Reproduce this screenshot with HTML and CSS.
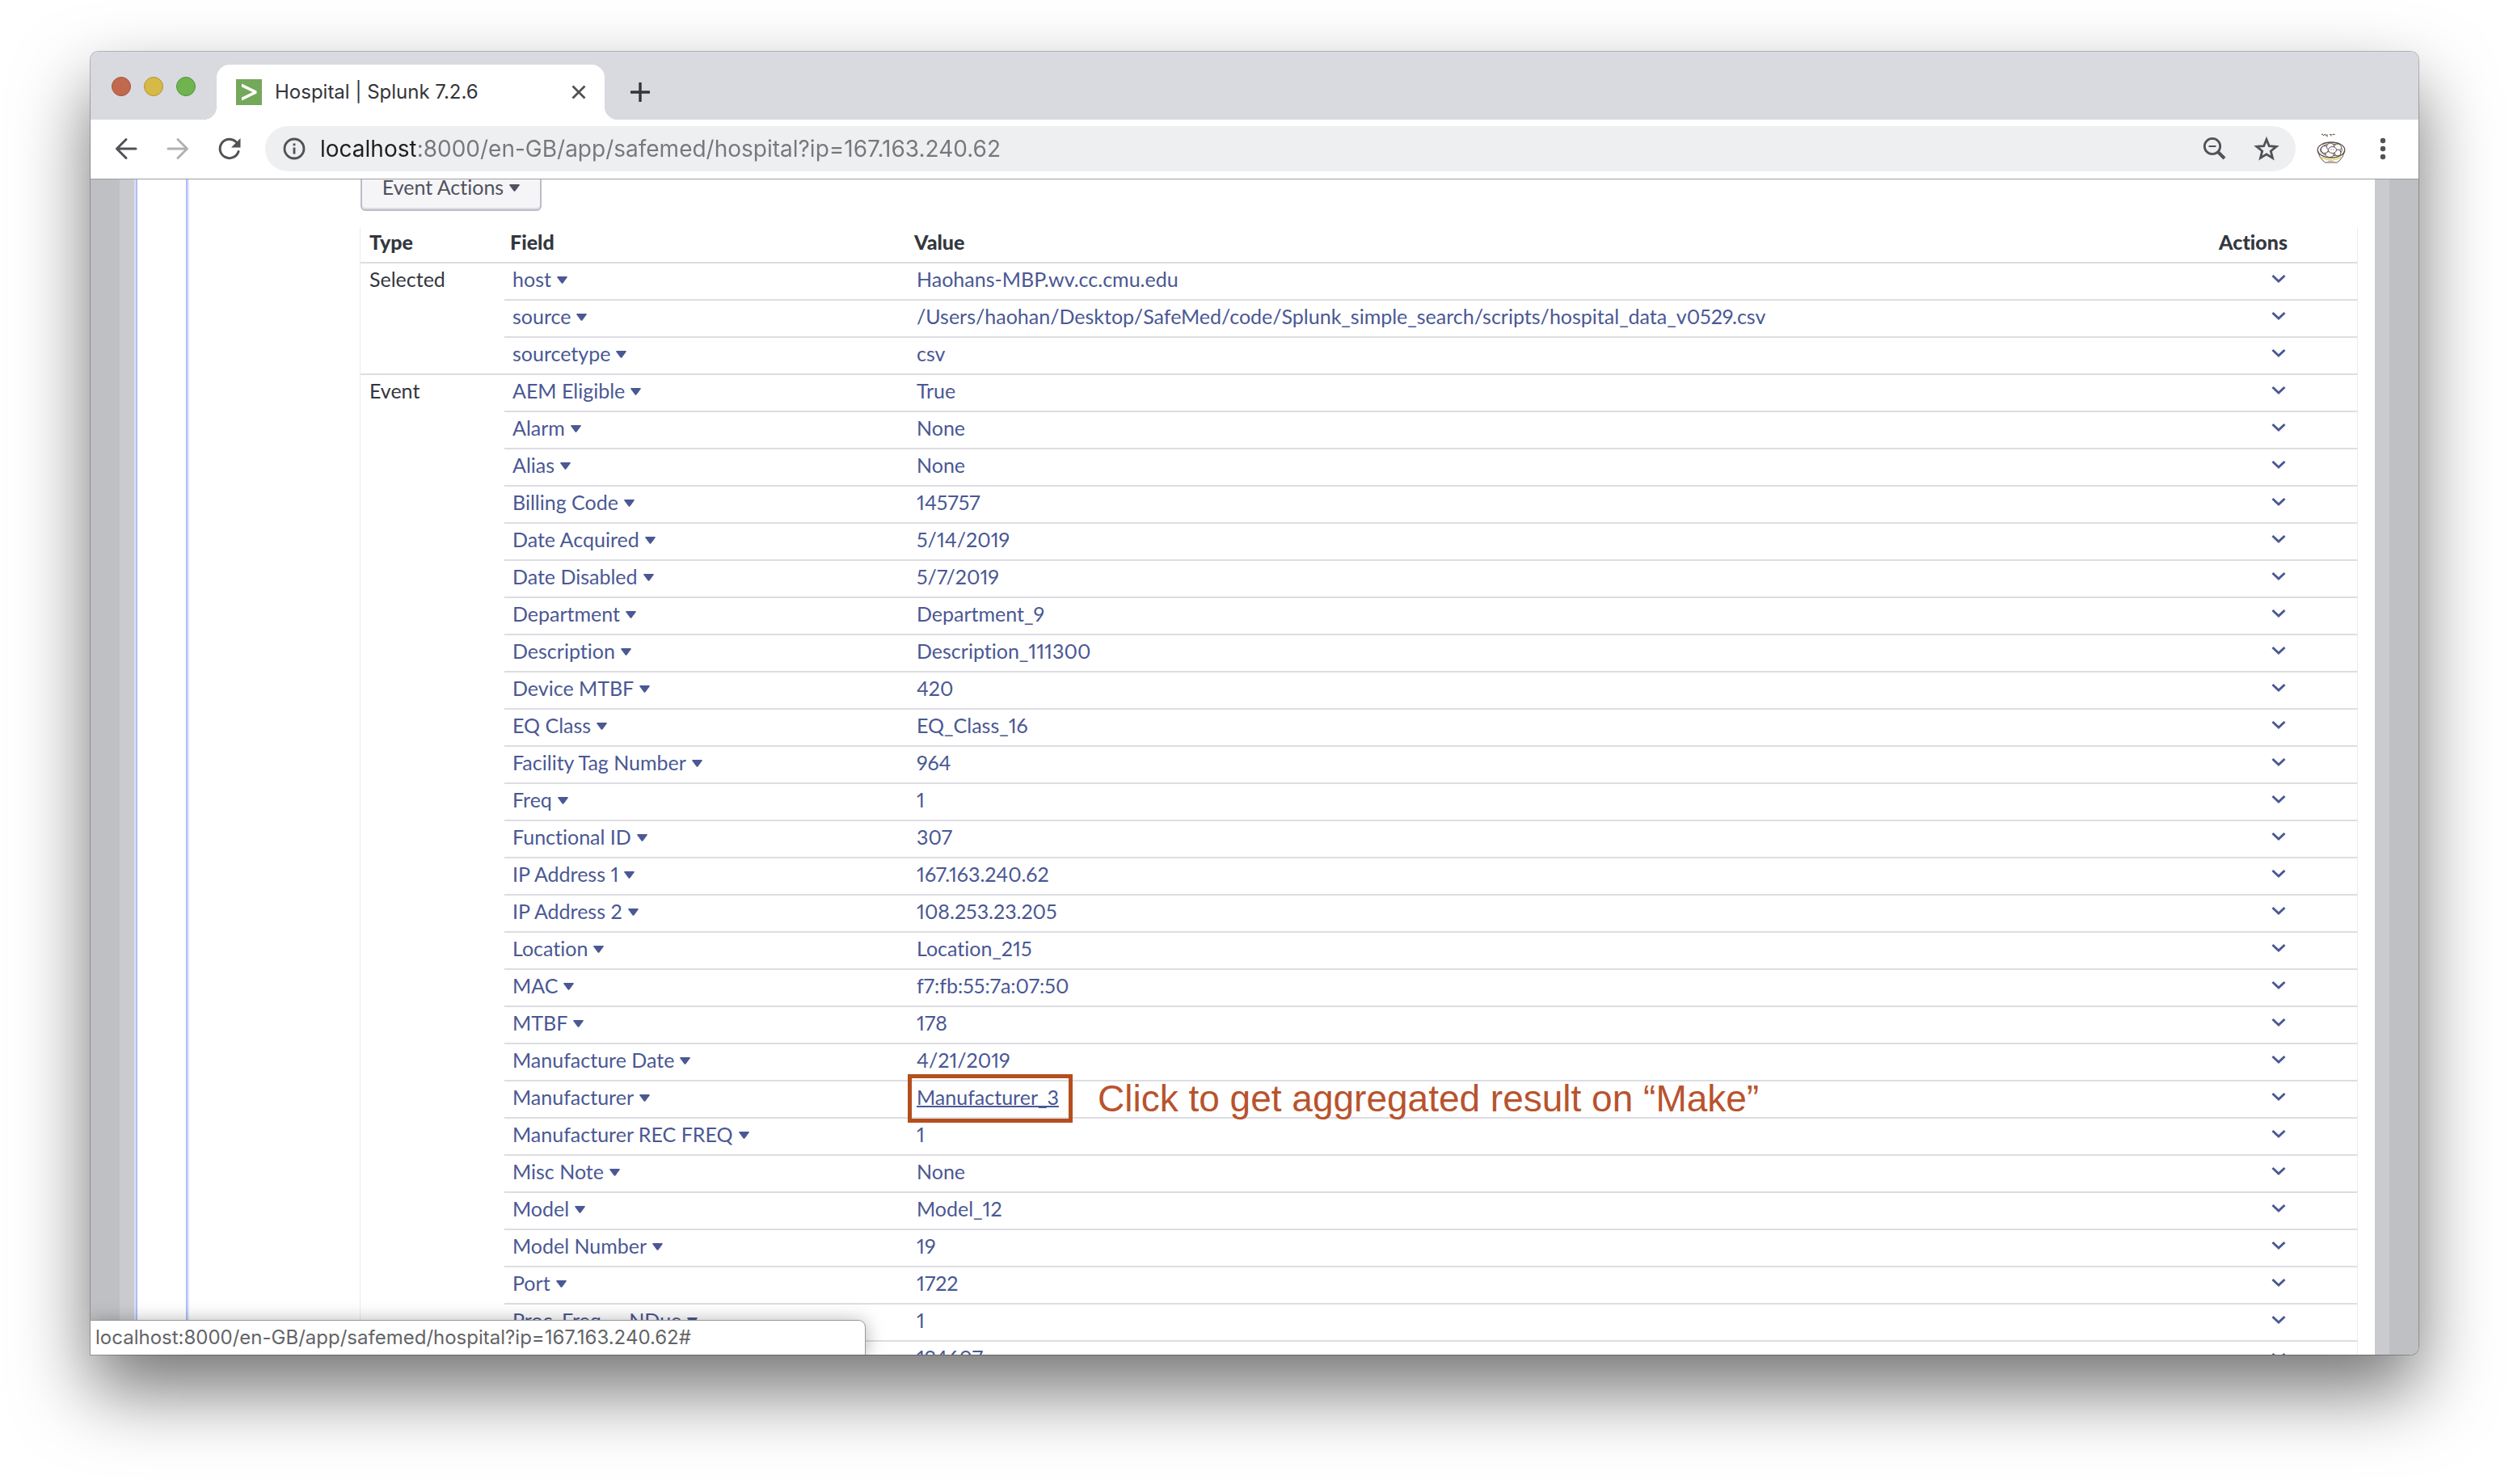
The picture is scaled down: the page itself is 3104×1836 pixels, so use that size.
FILE: index.html
```html
<!DOCTYPE html>
<html lang="en-GB">
<head>
<meta charset="utf-8">
<title>Hospital | Splunk 7.2.6</title>
<link rel="stylesheet" href="styles.css">
</head>
<body>
<svg class="sprite" aria-hidden="true">
  <symbol id="caret" viewBox="0 0 13 9"><path d="M1 0h11q1.300 0.500 0.500 1.600L7.500 8.200q-1 1.200-2 0L0.500 1.600Q-0.300 0.500 1 0z" fill="currentColor"/></symbol>
  <symbol id="chevron" viewBox="0 0 20 12"><path d="M2.500 2l7.500 7 7.500-7" fill="none" stroke="currentColor" stroke-width="3"/></symbol>
</svg>
<div class="window">
  <header class="tabstrip">
    <div class="lights">
      <button class="light red" aria-label="Close window"></button>
      <button class="light yellow" aria-label="Minimise window"></button>
      <button class="light green" aria-label="Zoom window"></button>
    </div>
    <div class="tab">
      <svg class="favicon" viewBox="0 0 32 32"><path d="M0 0h32v32H0z" fill="#74a85b"/><path d="M7 5.500l18.500 9v3L7 26.500v-4L20.500 16 7 9.500z" fill="#fff"/></svg>
      <span class="tab-title">Hospital | Splunk 7.2.6</span>
      <button class="icon-button tab-close" aria-label="Close tab"><svg viewBox="0 0 24 24"><path d="M4.500 4.500l15 15M19.500 4.500l-15 15" stroke="currentColor" stroke-width="2.800" fill="none"/></svg></button>
    </div>
    <button class="icon-button new-tab" aria-label="New tab"><svg viewBox="0 0 24 24"><path d="M12 1v22M1 12h22" stroke="currentColor" stroke-width="3.400" stroke-linecap="round" fill="none"/></svg></button>
  </header>
  <nav class="toolbar">
    <button class="icon-button nav" aria-label="Back"><svg viewBox="0 0 28 28"><path d="M26 14H3M14 2.500L2.500 14 14 25.500" stroke="currentColor" stroke-width="3" stroke-linecap="round" stroke-linejoin="round" fill="none"/></svg></button>
    <button class="icon-button nav" aria-label="Forward" disabled><svg viewBox="0 0 28 28"><path d="M2 14h23M14 2.500L25.500 14 14 25.500" stroke="currentColor" stroke-width="3" stroke-linecap="round" stroke-linejoin="round" fill="none"/></svg></button>
    <button class="icon-button nav" aria-label="Reload"><svg viewBox="0 0 28 28"><path d="M25 17.500A11.700 11.700 0 1 1 22 5.500" stroke="currentColor" stroke-width="3" stroke-linecap="round" fill="none"/><path d="M27.500 1v11.500H16z" fill="currentColor"/></svg></button>
    <div class="address">
      <button class="icon-button info" aria-label="Site information"><svg viewBox="0 0 28 28"><circle cx="14" cy="14" r="12" stroke="currentColor" stroke-width="2.800" fill="none"/><path d="M12.600 12.500h2.800v8h-2.800zM12.600 7.500h2.800v2.800h-2.800z" fill="currentColor"/></svg></button>
      <input class="url" type="text" aria-label="Address" value="localhost:8000/en-GB/app/safemed/hospital?ip=167.163.240.62">
      <button class="icon-button pill-icon" aria-label="Zoom out"><svg viewBox="0 0 32 32"><circle cx="13" cy="13" r="9.700" stroke="currentColor" stroke-width="2.800" fill="none"/><path d="M8.500 13h9" stroke="currentColor" stroke-width="2" fill="none"/><path d="M19.500 19.500l8.500 8.500" stroke="currentColor" stroke-width="4" fill="none"/></svg></button>
      <button class="icon-button pill-icon" aria-label="Bookmark"><svg viewBox="0 0 32 32"><path d="M16 4.500l3.300 8.200 8.800.600-6.800 5.600 2.200 8.600-7.500-4.700-7.500 4.700 2.200-8.600-6.800-5.600 8.800-.600z" stroke="currentColor" stroke-width="2.800" fill="none"/></svg></button>
    </div>
    <button class="icon-button profile" aria-label="Profile"><svg viewBox="0 0 40 40"><g fill="none" stroke="#5d4c49" stroke-width="1"><path d="M8 2.500q1.500-1.500 2 .500t1.500-.500q1-1.500 1.500.500t2-.500v3M18 2q1 2 2 0v2.500M21.500 2.500h1.500q1-1.500 1.500 .500M3.500 22q1 9 9 15h15q8-6 9-15"/><ellipse cx="20" cy="21.500" rx="16.800" ry="9.500" stroke-width="1.300"/><ellipse cx="20" cy="21.500" rx="13.500" ry="7.300"/><circle cx="12" cy="21" r="4.500" fill="#fff"/><circle cx="19" cy="17.500" r="4.500" fill="#fff"/><circle cx="28" cy="18.500" r="4.500" fill="#fff"/><circle cx="28" cy="25" r="4" fill="#fff"/><ellipse cx="18" cy="27" rx="5" ry="3.500" fill="#fff"/><ellipse cx="21.500" cy="21.500" rx="5" ry="4" fill="#fff"/><path d="M20 20.500v1M23 20.500v1"/></g><path d="M8 30.500q12 6.500 24 0" stroke="#e3df80" stroke-width="2" fill="none"/><path d="M16 35.500h7" stroke="#dcb1ad" stroke-width="1.500"/></svg></button>
    <button class="icon-button nav" aria-label="Menu"><svg viewBox="0 0 28 28"><g fill="currentColor"><circle cx="14" cy="4" r="3.200"/><circle cx="14" cy="14" r="3.200"/><circle cx="14" cy="24" r="3.200"/></g></svg></button>
  </nav>
  <main class="page">
    <div class="sheet"><div class="panel"><div class="drawer">
      <button class="event-actions">Event Actions <svg class="caret"><use href="#caret"/></svg></button>
      <table class="fields">
        <colgroup><col class="col-type"><col class="col-field"><col><col class="col-actions"></colgroup>
        <thead><tr><th class="type">Type</th><th>Field</th><th>Value</th><th class="actions">Actions</th></tr></thead>
        <tbody>
          <tr><td class="type" rowspan="3">Selected</td><td><button class="field">host <svg class="caret"><use href="#caret"/></svg></button></td><td><a href="#">Haohans-MBP.wv.cc.cmu.edu</a></td><td class="actions"><button class="more" aria-label="Actions for host"><svg><use href="#chevron"/></svg></button></td></tr>
          <tr><td><button class="field">source <svg class="caret"><use href="#caret"/></svg></button></td><td><a href="#">/Users/haohan/Desktop/SafeMed/code/Splunk_simple_search/scripts/hospital_data_v0529.csv</a></td><td class="actions"><button class="more" aria-label="Actions for source"><svg><use href="#chevron"/></svg></button></td></tr>
          <tr><td><button class="field">sourcetype <svg class="caret"><use href="#caret"/></svg></button></td><td><a href="#">csv</a></td><td class="actions"><button class="more" aria-label="Actions for sourcetype"><svg><use href="#chevron"/></svg></button></td></tr>
        </tbody>
        <tbody>
          <tr><td class="type" rowspan="27">Event</td><td><button class="field">AEM Eligible <svg class="caret"><use href="#caret"/></svg></button></td><td><a href="#">True</a></td><td class="actions"><button class="more" aria-label="Actions for AEM Eligible"><svg><use href="#chevron"/></svg></button></td></tr>
          <tr><td><button class="field">Alarm <svg class="caret"><use href="#caret"/></svg></button></td><td><a href="#">None</a></td><td class="actions"><button class="more" aria-label="Actions for Alarm"><svg><use href="#chevron"/></svg></button></td></tr>
          <tr><td><button class="field">Alias <svg class="caret"><use href="#caret"/></svg></button></td><td><a href="#">None</a></td><td class="actions"><button class="more" aria-label="Actions for Alias"><svg><use href="#chevron"/></svg></button></td></tr>
          <tr><td><button class="field">Billing Code <svg class="caret"><use href="#caret"/></svg></button></td><td><a href="#">145757</a></td><td class="actions"><button class="more" aria-label="Actions for Billing Code"><svg><use href="#chevron"/></svg></button></td></tr>
          <tr><td><button class="field">Date Acquired <svg class="caret"><use href="#caret"/></svg></button></td><td><a href="#">5/14/2019</a></td><td class="actions"><button class="more" aria-label="Actions for Date Acquired"><svg><use href="#chevron"/></svg></button></td></tr>
          <tr><td><button class="field">Date Disabled <svg class="caret"><use href="#caret"/></svg></button></td><td><a href="#">5/7/2019</a></td><td class="actions"><button class="more" aria-label="Actions for Date Disabled"><svg><use href="#chevron"/></svg></button></td></tr>
          <tr><td><button class="field">Department <svg class="caret"><use href="#caret"/></svg></button></td><td><a href="#">Department_9</a></td><td class="actions"><button class="more" aria-label="Actions for Department"><svg><use href="#chevron"/></svg></button></td></tr>
          <tr><td><button class="field">Description <svg class="caret"><use href="#caret"/></svg></button></td><td><a href="#">Description_111300</a></td><td class="actions"><button class="more" aria-label="Actions for Description"><svg><use href="#chevron"/></svg></button></td></tr>
          <tr><td><button class="field">Device MTBF <svg class="caret"><use href="#caret"/></svg></button></td><td><a href="#">420</a></td><td class="actions"><button class="more" aria-label="Actions for Device MTBF"><svg><use href="#chevron"/></svg></button></td></tr>
          <tr><td><button class="field">EQ Class <svg class="caret"><use href="#caret"/></svg></button></td><td><a href="#">EQ_Class_16</a></td><td class="actions"><button class="more" aria-label="Actions for EQ Class"><svg><use href="#chevron"/></svg></button></td></tr>
          <tr><td><button class="field">Facility Tag Number <svg class="caret"><use href="#caret"/></svg></button></td><td><a href="#">964</a></td><td class="actions"><button class="more" aria-label="Actions for Facility Tag Number"><svg><use href="#chevron"/></svg></button></td></tr>
          <tr><td><button class="field">Freq <svg class="caret"><use href="#caret"/></svg></button></td><td><a href="#">1</a></td><td class="actions"><button class="more" aria-label="Actions for Freq"><svg><use href="#chevron"/></svg></button></td></tr>
          <tr><td><button class="field">Functional ID <svg class="caret"><use href="#caret"/></svg></button></td><td><a href="#">307</a></td><td class="actions"><button class="more" aria-label="Actions for Functional ID"><svg><use href="#chevron"/></svg></button></td></tr>
          <tr><td><button class="field">IP Address 1 <svg class="caret"><use href="#caret"/></svg></button></td><td><a href="#">167.163.240.62</a></td><td class="actions"><button class="more" aria-label="Actions for IP Address 1"><svg><use href="#chevron"/></svg></button></td></tr>
          <tr><td><button class="field">IP Address 2 <svg class="caret"><use href="#caret"/></svg></button></td><td><a href="#">108.253.23.205</a></td><td class="actions"><button class="more" aria-label="Actions for IP Address 2"><svg><use href="#chevron"/></svg></button></td></tr>
          <tr><td><button class="field">Location <svg class="caret"><use href="#caret"/></svg></button></td><td><a href="#">Location_215</a></td><td class="actions"><button class="more" aria-label="Actions for Location"><svg><use href="#chevron"/></svg></button></td></tr>
          <tr><td><button class="field">MAC <svg class="caret"><use href="#caret"/></svg></button></td><td><a href="#">f7:fb:55:7a:07:50</a></td><td class="actions"><button class="more" aria-label="Actions for MAC"><svg><use href="#chevron"/></svg></button></td></tr>
          <tr><td><button class="field">MTBF <svg class="caret"><use href="#caret"/></svg></button></td><td><a href="#">178</a></td><td class="actions"><button class="more" aria-label="Actions for MTBF"><svg><use href="#chevron"/></svg></button></td></tr>
          <tr><td><button class="field">Manufacture Date <svg class="caret"><use href="#caret"/></svg></button></td><td><a href="#">4/21/2019</a></td><td class="actions"><button class="more" aria-label="Actions for Manufacture Date"><svg><use href="#chevron"/></svg></button></td></tr>
          <tr><td><button class="field">Manufacturer <svg class="caret"><use href="#caret"/></svg></button></td><td class="marked"><a class="hovered" href="#">Manufacturer_3</a><span class="mark-box"></span><span class="mark-note">Click to get aggregated result on “Make”</span></td><td class="actions"><button class="more" aria-label="Actions for Manufacturer"><svg><use href="#chevron"/></svg></button></td></tr>
          <tr><td><button class="field">Manufacturer REC FREQ <svg class="caret"><use href="#caret"/></svg></button></td><td><a href="#">1</a></td><td class="actions"><button class="more" aria-label="Actions for Manufacturer REC FREQ"><svg><use href="#chevron"/></svg></button></td></tr>
          <tr><td><button class="field">Misc Note <svg class="caret"><use href="#caret"/></svg></button></td><td><a href="#">None</a></td><td class="actions"><button class="more" aria-label="Actions for Misc Note"><svg><use href="#chevron"/></svg></button></td></tr>
          <tr><td><button class="field">Model <svg class="caret"><use href="#caret"/></svg></button></td><td><a href="#">Model_12</a></td><td class="actions"><button class="more" aria-label="Actions for Model"><svg><use href="#chevron"/></svg></button></td></tr>
          <tr><td><button class="field">Model Number <svg class="caret"><use href="#caret"/></svg></button></td><td><a href="#">19</a></td><td class="actions"><button class="more" aria-label="Actions for Model Number"><svg><use href="#chevron"/></svg></button></td></tr>
          <tr><td><button class="field">Port <svg class="caret"><use href="#caret"/></svg></button></td><td><a href="#">1722</a></td><td class="actions"><button class="more" aria-label="Actions for Port"><svg><use href="#chevron"/></svg></button></td></tr>
          <tr><td><button class="field">Proc_Freq___NDue <svg class="caret"><use href="#caret"/></svg></button></td><td><a href="#">1</a></td><td class="actions"><button class="more" aria-label="Actions for Proc_Freq___NDue"><svg><use href="#chevron"/></svg></button></td></tr>
          <tr><td></td><td><a href="#">194607</a></td><td class="actions"><button class="more" aria-label="Actions"><svg><use href="#chevron"/></svg></button></td></tr>
        </tbody>
      </table>
    </div></div></div>
    <div class="status">localhost:8000/en-GB/app/safemed/hospital?ip=167.163.240.62#</div>
  </main>
</div>
</body>
</html>
```
FILE: styles.css
```css
* { box-sizing: border-box; }

body {
  margin: 0;
  height: 100vh;
  padding: 64px 112px 160px;
  background: #fff;
  font-family: Inter, "Liberation Sans", sans-serif;
  overflow: hidden;
}

button {
  margin: 0;
  padding: 0;
  border: 0;
  background: none;
  color: inherit;
  font: inherit;
}

.sprite { position: absolute; width: 0; height: 0; }

.window {
  height: 100%;
  display: flex;
  flex-direction: column;
  border-radius: 10px 10px 10px 0;
  background: #fff;
  box-shadow: 0 0 0 1px rgba(0, 0, 0, .25), 0 44px 92px rgba(0, 0, 0, .55);
}

/* Tab strip */
.tabstrip {
  flex: none;
  height: 84px;
  padding-left: 26px;
  display: flex;
  align-items: flex-end;
  background: #d9dadf;
  border-radius: 10px 10px 0 0;
}
.lights { display: flex; gap: 16px; margin: 0 26px 29px 0; }
.light { width: 24px; height: 24px; border-radius: 50%; border: 1px solid; }
.red { background: #c0694c; border-color: #ac5238; }
.yellow { background: #d6b946; border-color: #b39339; }
.green { background: #6fb44f; border-color: #4f943a; }

.tab {
  position: relative;
  width: 480px;
  height: 68px;
  padding: 0 20px 0 24px;
  display: flex;
  align-items: center;
  gap: 16px;
  background: #fff;
  border-radius: 16px 16px 0 0;
}
.tab::before, .tab::after {
  content: "";
  position: absolute;
  bottom: 0;
  width: 16px;
  height: 16px;
}
.tab::before { right: 100%; background: radial-gradient(circle at 0 0, transparent 16px, #fff 16px); }
.tab::after { left: 100%; background: radial-gradient(circle at 100% 0, transparent 16px, #fff 16px); }
.favicon { width: 32px; height: 32px; }
.tab-title { flex: 1; font-size: 24px; line-height: 32px; color: #33353a; white-space: nowrap; }

.icon-button { flex: none; display: flex; align-items: center; justify-content: center; color: #505256; }
.icon-button svg { display: block; width: 28px; height: 28px; }
.tab-close svg, .new-tab svg { width: 24px; height: 24px; }
.new-tab { margin: 0 0 22px 32px; color: #333539; }

/* Toolbar */
.toolbar {
  flex: none;
  height: 74px;
  padding: 0 12px 1px;
  display: flex;
  align-items: center;
  border-bottom: 1px solid #9d9ea0;
  background: #fff;
}
.nav, .profile { width: 64px; height: 56px; }
.nav:disabled { color: #b0b1b3; }
.profile svg { width: 40px; height: 40px; }
.address {
  flex: 1;
  height: 56px;
  margin: 0 12px;
  padding: 0 20px 0 22px;
  display: flex;
  align-items: center;
  border-radius: 28px;
  background: #eeeff1;
}
.url {
  flex: 1;
  min-width: 0;
  height: 40px;
  margin-left: 18px;
  padding: 0;
  border: 0;
  font: 28px/40px Inter, "Liberation Sans", sans-serif;
  color: #75777b;
  /* host name dark, rest of the address grey */
  background: linear-gradient(90deg, #1d1e21 118px, #75777b 118px);
  -webkit-background-clip: text;
  background-clip: text;
  -webkit-text-fill-color: transparent;
}
.pill-icon { margin-left: 32px; }
.pill-icon svg { width: 32px; height: 32px; }

/* Page */
.page {
  position: relative;
  flex: 1;
  min-height: 0;
  padding: 0 36px;
  overflow: hidden;
  background: #bfc0c4;
  border-radius: 0 0 10px 0;
  font-family: Lato, "Liberation Sans", sans-serif;
  font-size: 25px;
  line-height: 30px;
  font-variant-ligatures: none;
  font-variant-numeric: proportional-nums;
  color: #33373e;
}
.sheet { padding: 0 18px 0 20px; background: #cacbcf; overflow: hidden; }
.panel { padding-left: 60px; background: #fff; border-left: 2px solid #b0bcf9; box-shadow: -2px 0 #dce1f4; }
.drawer {
  padding: 0 22px 0 214px;
  border-left: 2px solid #b0bcf9;
  box-shadow: inset 2px 0 #dfe4fd;
  display: flow-root;
}

.caret { width: 13px; height: 9px; margin: 2px 0 0 7px; }
.event-actions {
  width: 224px;
  height: 56px;
  margin: -17px 0 20px;
  padding: 0 0 4px;
  display: flex;
  align-items: center;
  justify-content: center;
  border: 2px solid #b9bdc8;
  border-radius: 6px;
  background: #f5f5f8;
  box-shadow: inset 0 -2px #dcdde2;
  color: #50525e;
}

.fields {
  width: 100%;
  table-layout: fixed;
  border-collapse: separate;
  border-spacing: 0;
  box-shadow: -1px 0 #ececf0, 1px 0 #ececf0;
}
.col-type { width: 178px; }
.col-field { width: 500px; }
.col-actions { width: 180px; }
th, td {
  padding: 4px 10px 10px;
  border-bottom: 2px solid #dddde3;
  text-align: left;
  vertical-align: top;
  white-space: nowrap;
}
th { padding: 3px 7px 10px; font-weight: 900; }
td.type, th.type { padding-left: 11px; }
th.actions { padding-right: 86px; text-align: right; }
td.actions { padding-right: 87px; }

.field { display: flex; align-items: center; color: #4a5894; }
td a { display: block; width: max-content; color: #4a5894; text-decoration: none; }
td a.hovered { text-decoration: underline; text-decoration-thickness: 2px; }
.more { display: block; margin-left: auto; height: 30px; color: #4a5894; }
.more svg { display: block; width: 20px; height: 12px; }

/* Callout over the manufacturer value */
.marked { position: relative; }
.mark-box {
  position: absolute;
  top: -9px;
  left: -1px;
  width: 204px;
  height: 60px;
  border: 5px solid #b54e1d;
}
.mark-note {
  position: absolute;
  top: -5px;
  left: 234px;
  font: 46px/52px "Liberation Sans", sans-serif;
  color: #b8532d;
}

/* Link preview */
.status {
  position: absolute;
  left: 0;
  bottom: 0;
  width: 958px;
  height: 42px;
  padding: 0 6px;
  background: #fff;
  border-radius: 0 8px 0 0;
  box-shadow: 0 0 0 1px #98989a, 0 2px 24px rgba(0, 0, 0, .35);
  font: 24px/42px Inter, "Liberation Sans", sans-serif;
  color: #636467;
  white-space: nowrap;
}
```
